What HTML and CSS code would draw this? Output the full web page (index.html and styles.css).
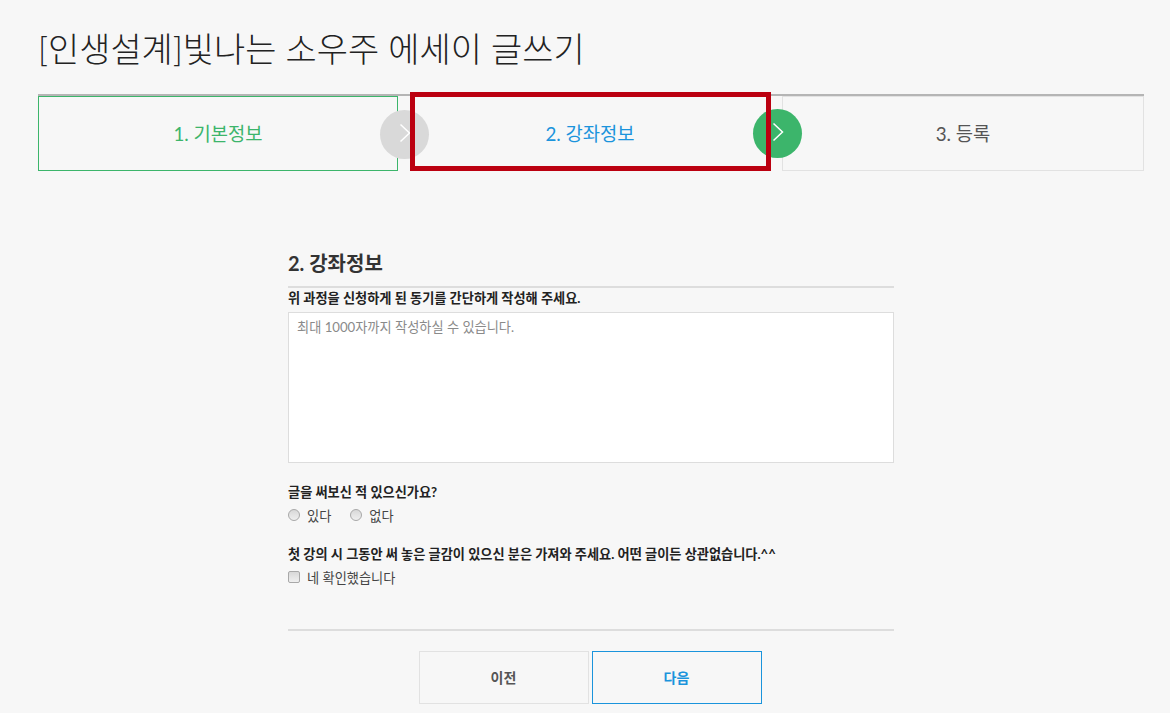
FILE: index.html
```html
<!DOCTYPE html>
<html lang="ko">
<head>
<meta charset="utf-8">
<title>글쓰기</title>
<link rel="stylesheet" href="styles.css">
</head>
<body>
<div class="page">
  <h1 class="title">[인생설계]빛나는 소우주 에세이 글쓰기</h1>
  <div class="steps">
    <div class="step step-done">1. 기본정보
      <span class="arrow arrow-gray"><svg class="chevron" width="12" height="20" viewBox="0 0 12 20"><path d="M1.5 1.5l9 8.5-9 8.5" fill="none" stroke="#fff" stroke-width="1.5"/></svg></span>
    </div>
    <div class="step step-current">2. 강좌정보
      <span class="arrow arrow-green"><svg class="chevron" width="12" height="20" viewBox="0 0 12 20"><path d="M1.5 1.5l9 8.5-9 8.5" fill="none" stroke="#fff" stroke-width="1.5"/></svg></span>
      <span class="highlight"></span>
    </div>
    <div class="step step-next">3. 등록</div>
  </div>
  <form class="form">
    <h2 class="section-title">2. 강좌정보</h2>
    <p class="label label-first">위 과정을 신청하게 된 동기를 간단하게 작성해 주세요.</p>
    <textarea class="motive" placeholder="최대 1000자까지 작성하실 수 있습니다."></textarea>
    <p class="label label-q1">글을 써보신 적 있으신가요?</p>
    <div class="options">
      <label class="option"><input class="radio" type="radio" name="exp"><span>있다</span></label>
      <label class="option"><input class="radio" type="radio" name="exp"><span>없다</span></label>
    </div>
    <p class="label label-q2">첫 강의 시 그동안 써 놓은 글감이 있으신 분은 가져와 주세요. 어떤 글이든 상관없습니다.^^</p>
    <div class="options options-check">
      <label class="option"><input class="check" type="checkbox"><span>네 확인했습니다</span></label>
    </div>
    <div class="actions">
      <button type="button" class="btn btn-prev">이전</button>
      <button type="button" class="btn btn-next">다음</button>
    </div>
  </form>
</div>
</body>
</html>
```
FILE: styles.css
```css
* { box-sizing: border-box; }
html, body { margin: 0; height: 713px; overflow: hidden; }
body {
  background: #f7f7f7;
  color: #333;
  font-family: Lato, "Noto Sans CJK KR", sans-serif;
}
.page { padding: 0 26px 0 38px; }
.title {
  margin: 0;
  padding-top: 24px;
  height: 94px;
  font-size: 33.9px;
  line-height: 50px;
  font-weight: 300;
  color: #222;
}
.steps {
  display: flex;
  gap: 12px;
  height: 77px;
  border-top: 2px solid #b5b5b5;
}
.step {
  position: relative;
  flex: 0 0 360px;
  height: 75px;
  padding-bottom: 2px;
  display: flex;
  align-items: center;
  justify-content: center;
  font-size: 18.8px;
  font-weight: 400;
}
.step-done { border: 1px solid #3cb56b; color: #3cb56b; }
.step-current { color: #1b94dc; }
.step-next { flex: 0 0 362px; border: 1px solid #e2e2e2; color: #555; }
.arrow {
  position: absolute;
  top: 13px;
  right: -32px;
  width: 49px;
  height: 49px;
  border-radius: 50%;
  display: flex;
  align-items: center;
  justify-content: center;
  z-index: 1;
}
.chevron { margin-bottom: 3px; }
.arrow-gray { background: #d9d9d9; }
.arrow-green { background: #3cb56b; }
.highlight {
  position: absolute;
  left: 0;
  top: -4px;
  width: 361px;
  height: 79px;
  border: 5px solid #bb0010;
  z-index: 2;
}
.form {
  width: 606px;
  margin-left: 250px;
  padding-top: 77px;
}
.section-title {
  margin: 0;
  height: 40px;
  border-bottom: 2px solid #ddd;
  font-size: 20px;
  line-height: 30px;
  font-weight: 700;
  color: #333;
}
.label {
  margin: 0;
  font-size: 13.2px;
  line-height: 18px;
  font-weight: 700;
  color: #222;
}
.label-first { padding-top: 1px; height: 24px; }
.motive {
  display: block;
  width: 606px;
  height: 151px;
  padding: 5px 8px;
  margin: 0;
  border: 1px solid #ddd;
  background: #fff;
  resize: none;
  font-family: Lato, "Noto Sans CJK KR", sans-serif;
  font-size: 13.2px;
  line-height: 18px;
  font-weight: 400;
  outline: 0;
}
.motive::placeholder { color: #8a8a8a; opacity: 1; }
.label-q1 { margin-top: 20px; }
.options { display: flex; gap: 19px; margin-top: 4px; height: 20px; align-items: center; }
.option { display: flex; align-items: center; gap: 7px; font-size: 13.2px; color: #444; font-weight: 400; }
.radio, .check {
  appearance: none;
  margin: 0;
  width: 12px;
  height: 12px;
  border: 1px solid #a8a8a8;
  background: linear-gradient(#d8d8d8, #efefef);
}
.radio { border-radius: 50%; }
.check { border-radius: 2px; }
.label-q2 { margin-top: 20px; }
.options-check { margin-top: 4px; }
.actions {
  margin-top: 42px;
  padding: 20px 2px 0 0;
  border-top: 2px solid #ddd;
  display: flex;
  justify-content: center;
  gap: 3px;
}
.btn {
  width: 170px;
  height: 53px;
  background: transparent;
  font-family: Lato, "Noto Sans CJK KR", sans-serif;
  font-size: 14px;
  font-weight: 700;
  padding: 0 0 2px;
}
.btn-prev { border: 1px solid #e2e2e2; color: #555; }
.btn-next { border: 1px solid #1b94dc; color: #1b94dc; }
```
